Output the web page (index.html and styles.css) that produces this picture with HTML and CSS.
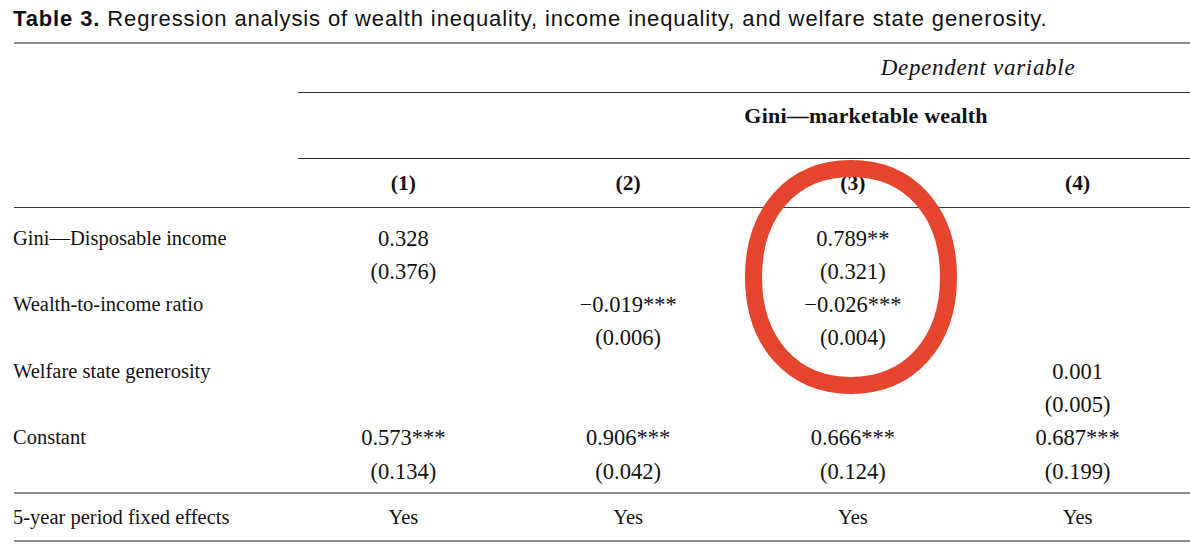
FILE: index.html
```html
<!DOCTYPE html>
<html lang="en">
<head>
<meta charset="utf-8">
<title>Table 3</title>
<link rel="stylesheet" href="styles.css">
</head>
<body>
<div class="page">
  <p class="caption"><b>Table 3.</b> Regression analysis of wealth inequality, income inequality, and welfare state generosity.</p>
  <table class="reg">
    <colgroup>
      <col class="c-label">
      <col class="c-num"><col class="c-num"><col class="c-num"><col class="c-num">
    </colgroup>
    <thead>
      <tr class="h-dep">
        <th></th>
        <th colspan="4" class="span"><div class="rule dep">Dependent variable</div></th>
      </tr>
      <tr class="h-var">
        <th></th>
        <th colspan="4" class="span"><div class="rule var">Gini—marketable wealth</div></th>
      </tr>
      <tr class="h-num">
        <th></th><th>(1)</th><th>(2)</th><th>(3)</th><th>(4)</th>
      </tr>
    </thead>
    <tbody class="coefs">
      <tr class="first"><td class="lab">Gini—Disposable income</td><td>0.328</td><td></td><td>0.789**</td><td></td></tr>
      <tr><td class="lab"></td><td>(0.376)</td><td></td><td>(0.321)</td><td></td></tr>
      <tr><td class="lab">Wealth-to-income ratio</td><td></td><td>−0.019***</td><td>−0.026***</td><td></td></tr>
      <tr><td class="lab"></td><td></td><td>(0.006)</td><td>(0.004)</td><td></td></tr>
      <tr><td class="lab">Welfare state generosity</td><td></td><td></td><td></td><td>0.001</td></tr>
      <tr><td class="lab"></td><td></td><td></td><td></td><td>(0.005)</td></tr>
      <tr><td class="lab">Constant</td><td>0.573***</td><td>0.906***</td><td>0.666***</td><td>0.687***</td></tr>
      <tr class="last"><td class="lab"></td><td>(0.134)</td><td>(0.042)</td><td>(0.124)</td><td>(0.199)</td></tr>
    </tbody>
    <tbody class="fe">
      <tr><td class="lab">5-year period fixed effects</td><td>Yes</td><td>Yes</td><td>Yes</td><td>Yes</td></tr>
    </tbody>
  </table>
  <svg class="highlight" width="222" height="244" viewBox="0 0 222 244" aria-hidden="true">
    <path d="M111 13.5 C169.5 13.5 208.5 56.9 208.5 122 C208.5 187.1 169.5 230.5 111 230.5 C52.5 230.5 13.5 187.1 13.5 122 C13.5 56.9 52.5 13.5 111 13.5 Z" fill="none" stroke="#e5452c" stroke-width="17"/>
  </svg>
</div>
</body>
</html>
```

FILE: styles.css
```css
html, body {
  margin: 0;
  padding: 0;
  background: #ffffff;
}

.page {
  position: relative;
  width: 1190px;
  height: 554px;
  padding-left: 13px;
  box-sizing: border-box;
  overflow: hidden;
}

.caption {
  margin: 0;
  padding: 5px 0 9px 0;
  font-family: "Liberation Sans", Arial, sans-serif;
  font-size: 22px;
  letter-spacing: 0.88px;
  line-height: 28px;
  color: #111;
  white-space: nowrap;
}

.caption b {
  font-weight: 700;
}

.reg {
  margin-left: 1px;
  width: 1176px;
  table-layout: fixed;
  border-collapse: collapse;
  font-family: "Liberation Serif", "Times New Roman", serif;
  font-size: 20.5px;
  color: #111;
  border-top: 2px solid #8c8c8c;
}

.c-label { width: 277px; }
.c-num { width: 224.75px; }

.reg th, .reg td {
  padding: 0;
  text-align: center;
  font-weight: normal;
  white-space: nowrap;
}

.reg .span {
  padding-left: 7px;
}

.rule {
  box-sizing: border-box;
  border-bottom: 1px solid #2a2a2a;
  text-align: center;
}

.dep {
  height: 49px;
  line-height: 48px;
  font-style: italic;
  font-size: 23px;
  letter-spacing: 0.7px;
  padding-left: 468px;
}

.var {
  height: 66px;
  line-height: 33px;
  padding-top: 6px;
  font-weight: 700;
  font-size: 22px;
  letter-spacing: 0.2px;
  padding-left: 244px;
}

.h-num th {
  height: 48px;
  line-height: 48px;
  font-weight: 700;
  font-size: 21.5px;
  border-bottom: 1px solid #3a3a3a;
}

.coefs td {
  line-height: 33.3px;
  height: 33.3px;
  font-size: 22.5px;
}

.coefs .first td {
  padding-top: 13.5px;
}

.coefs .last td {
  padding-bottom: 4px;
}

.reg td.lab {
  text-align: left;
  text-indent: -1px;
  font-size: 20.5px;
}

.fe td {
  height: 46px;
  line-height: 46px;
  border-top: 2px solid #8c8c8c;
  border-bottom: 2px solid #8c8c8c;
}

.highlight {
  position: absolute;
  left: 740px;
  top: 155px;
}
```
